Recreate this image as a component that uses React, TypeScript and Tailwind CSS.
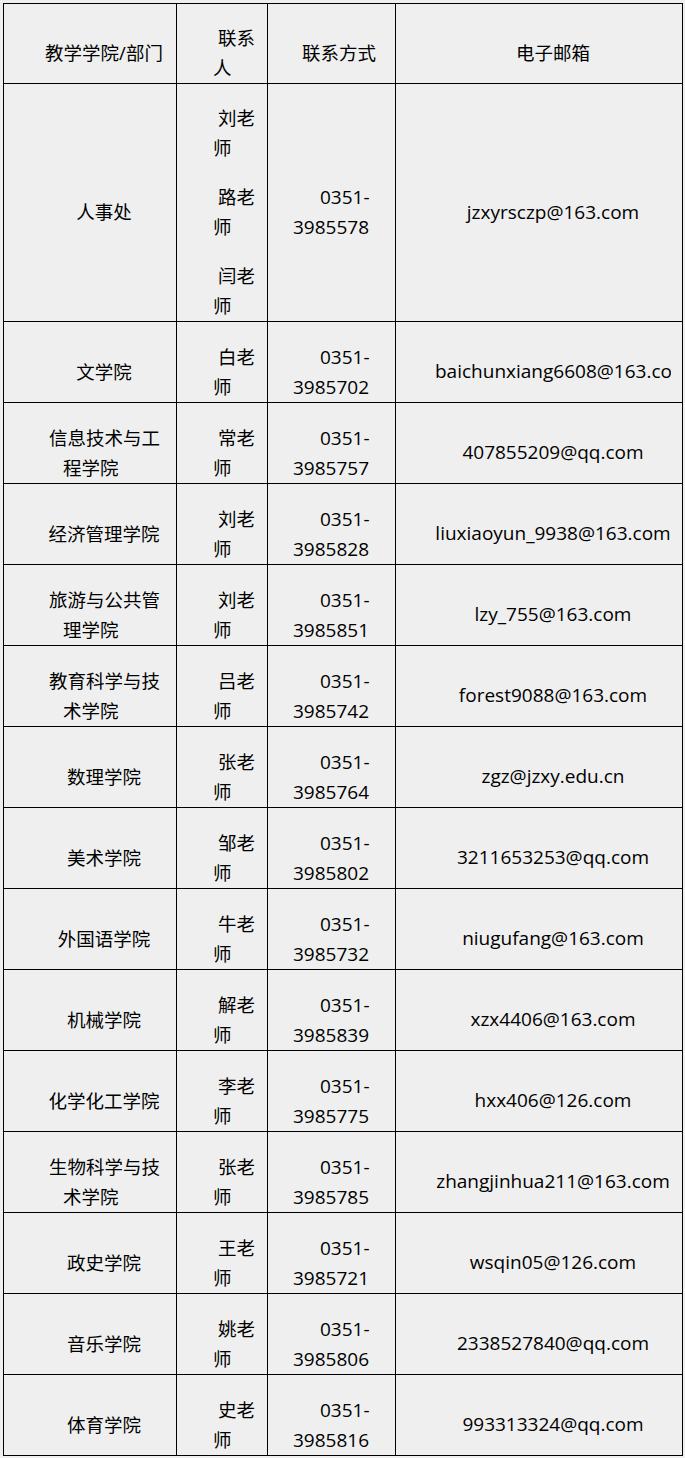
import React from "react";

type Row = {
  dept: string[];
  person: string;
  phone: string;
  email: string;
};

const rows: Row[] = [
  { dept: ["文学院"], person: "白老师", phone: "3985702", email: "baichunxiang6608@163.com" },
  { dept: ["信息技术与工", "程学院"], person: "常老师", phone: "3985757", email: "407855209@qq.com" },
  { dept: ["经济管理学院"], person: "刘老师", phone: "3985828", email: "liuxiaoyun_9938@163.com" },
  { dept: ["旅游与公共管", "理学院"], person: "刘老师", phone: "3985851", email: "lzy_755@163.com" },
  { dept: ["教育科学与技", "术学院"], person: "吕老师", phone: "3985742", email: "forest9088@163.com" },
  { dept: ["数理学院"], person: "张老师", phone: "3985764", email: "zgz@jzxy.edu.cn" },
  { dept: ["美术学院"], person: "邹老师", phone: "3985802", email: "3211653253@qq.com" },
  { dept: ["外国语学院"], person: "牛老师", phone: "3985732", email: "niugufang@163.com" },
  { dept: ["机械学院"], person: "解老师", phone: "3985839", email: "xzx4406@163.com" },
  { dept: ["化学化工学院"], person: "李老师", phone: "3985775", email: "hxx406@126.com" },
  { dept: ["生物科学与技", "术学院"], person: "张老师", phone: "3985785", email: "zhangjinhua211@163.com" },
  { dept: ["政史学院"], person: "王老师", phone: "3985721", email: "wsqin05@126.com" },
  { dept: ["音乐学院"], person: "姚老师", phone: "3985806", email: "2338527840@qq.com" },
  { dept: ["体育学院"], person: "史老师", phone: "3985816", email: "993313324@qq.com" },
];

const cell = "border-r border-b border-black flex items-center pt-[19px]";

// name like "刘老师" wraps after two characters in the narrow column
const Person = ({ name }: { name: string }) => (
  <div className="leading-[30px]">
    <div className="pl-[5px]">{name.slice(0, 2)}</div>
    <div>{name.slice(2)}</div>
  </div>
);

const Dept = ({ lines }: { lines: string[] }) =>
  lines.length === 1 ? (
    <div className={`${cell} pl-[40px] pr-[12px] justify-center`}>
      <span>{lines[0]}</span>
    </div>
  ) : (
    <div className={`${cell} pl-[45px]`}>
      <div className="leading-[30px]">
        <div>{lines[0]}</div>
        <div className="pl-[14px]">{lines[1]}</div>
      </div>
    </div>
  );

const Phone = ({ num }: { num: string }) => (
  <div className={`${cell} pl-[25px] text-[19px]`}>
    <div className="leading-[30px]">
      <div className="pl-[27px]">0351-</div>
      <div>{num}</div>
    </div>
  </div>
);

const Email = ({ text }: { text: string }) => (
  <div className={`${cell} pl-[39px] text-[19px]`}>
    <div className="w-[236px] overflow-hidden whitespace-nowrap text-center">{text}</div>
  </div>
);

export default function App() {
  return (
    <div
      className="min-h-[1458px] w-[685px] bg-[#efefef] pl-[3px] pt-[3px] text-[18.5px] text-black"
      style={{ fontFamily: '"Open Sans", "Noto Sans CJK SC", sans-serif' }}
    >
      <div className="grid w-fit grid-cols-[173px_91px_128px_287px] border-l border-t border-black">
        {/* header */}
        <div className={`${cell} h-[80px] pl-[40px] pr-[12px] justify-center`}>教学学院/部门</div>
        <div className={`${cell} pl-[36px]`}>
          <div className="leading-[30px]">
            <div className="pl-[5px]">联系</div>
            <div>人</div>
          </div>
        </div>
        <div className={`${cell} pl-[34px]`}>联系方式</div>
        <div className={`${cell} pl-[39px]`}>
          <div className="w-[236px] text-center">电子邮箱</div>
        </div>

        {/* 人事处 */}
        <div className={`${cell} h-[238px] pl-[40px] pr-[12px] justify-center`}>人事处</div>
        <div className={`${cell} pl-[36px]`}>
          <div className="flex flex-col gap-[19px]">
            <Person name="刘老师" />
            <Person name="路老师" />
            <Person name="闫老师" />
          </div>
        </div>
        <Phone num="3985578" />
        <Email text="jzxyrsczp@163.com" />

        {rows.map((r, i) => (
          <React.Fragment key={i}>
            <Dept lines={r.dept} />
            <div className={`${cell} h-[81px] pl-[36px]`}>
              <Person name={r.person} />
            </div>
            <Phone num={r.phone} />
            <Email text={r.email} />
          </React.Fragment>
        ))}
      </div>
    </div>
  );
}
